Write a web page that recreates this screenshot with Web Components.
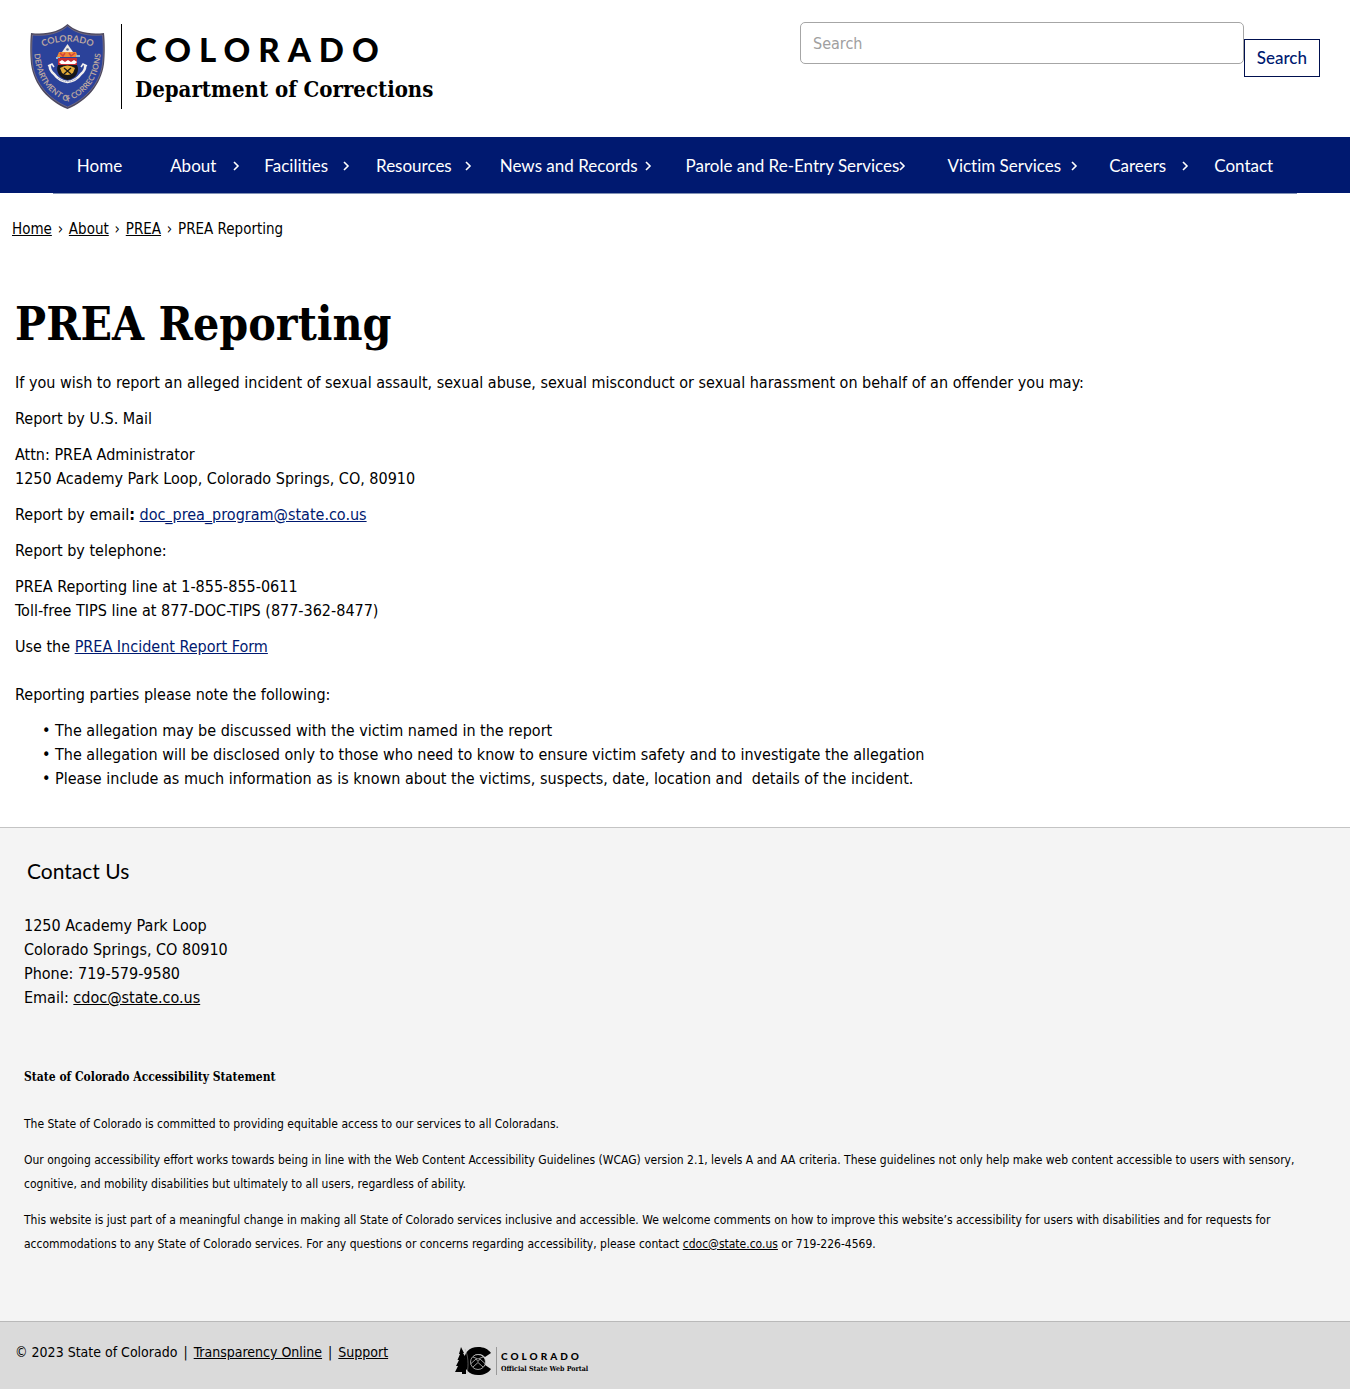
<!DOCTYPE html>
<html lang="en">
<head>
<meta charset="utf-8">
<meta name="viewport" content="width=device-width, initial-scale=1">
<title>PREA Reporting | Department of Corrections</title>
<style>
  :root {
    --navy: #001970;
    --body-font: "DejaVu Sans Condensed", "Trebuchet MS", sans-serif;
    --sans-font: Lato, "Open Sans", sans-serif;
    --slab-font: "DejaVu Serif Condensed", "DejaVu Serif", serif;
  }
  body { margin: 0; background: #fff; color: #000; font: 16px/24px var(--body-font); }
</style>
</head>
<body>
<doc-page></doc-page>

<script>
const define = (name, html) => {
  const template = document.createElement('template');
  template.innerHTML = html;
  customElements.define(name, class extends HTMLElement {
    constructor() {
      super();
      this.attachShadow({ mode: 'open' }).append(template.content.cloneNode(true));
    }
  });
};

define('doc-shield', `
<style>
  :host { display: block; width: 75px; height: 85px; flex: none; }
  svg { display: block; width: 100%; height: 100%; }
  text { font: 700 9px Lato, sans-serif; fill: #b9a6a0; }
  .rim { font-size: 8px; }
</style>
<svg viewBox="0 0 75 85" role="img" aria-label="Department of Corrections badge">
  <defs>
    <path id="top" d="M10 24Q37.500 11 65 24"/>
    <path id="rim" d="M4 20C4 52 15 68 37.500 78C60 68 71 52 71 20"/>
  </defs>
  <path d="M37.500 0C30 7 17 11 1 9C0 18 0 30 1 40C4 61 18 77 37.500 85C57 77 71 61 74 40C75 30 75 18 74 9C58 11 45 7 37.500 0Z" fill="#4d4960"/>
  <path d="M37.500 2C30 9 17 12.500 2.500 11C1.500 20 1.500 30 2.500 40C5.500 60 19 75 37.500 83C56 75 69.500 60 72.500 40C73.500 30 73.500 20 72.500 11C58 12.500 45 9 37.500 2Z" fill="#2b429a" stroke="#8c7c86" stroke-width=".6"/>
  <text text-anchor="middle"><textPath href="#top" startOffset="50%">COLORADO</textPath></text>
  <text class="rim" text-anchor="middle"><textPath href="#rim" startOffset="50%">DEPARTMENT OF CORRECTIONS</textPath></text>
  <path d="M37.500 20L43 28H32Z" fill="#f0e9e0"/>
  <circle cx="37.500" cy="25.500" r="1.300" fill="#52628e"/>
  <path d="M29 28h17l2 5H27z" fill="#f08a35"/>
  <path d="M30 29l3 3 2-3M39 29l2 3 4-3" fill="none" stroke="#d3433c" stroke-width="1.500"/>
  <path d="M26 33h4v2h-4zM46 31h4v2h-4z" fill="#8fb6d8"/>
  <path d="M28 34h19v7H28z" fill="#c62f36"/>
  <path d="M29 38l3-2 3 2 3-2 3 2 3-2 3 2-2 2H31z" fill="#fff"/>
  <path d="M28 41h19c3 6-1 14-9.500 15C30 55 25 47 28 41Z" fill="#17171b"/>
  <path d="M30 44q7.500-5 15 0l-2 5q-5.500 4-11 0z" fill="#e1aa37"/>
  <path d="M34 44l7 6M41 44l-7 6" stroke="#17171b" stroke-width="1.300"/>
  <path d="M20 41q-1 5 4 9q5 7 13.500 8q8.500-1 13.500-8q5-4 4-9" fill="none" stroke="#f1eff0" stroke-width="2.400"/>
  <path d="M18 42l4-2 2 3M57 42l-4-2-2 3" fill="none" stroke="#f1eff0" stroke-width="1.500"/>
  <path d="M28 54q9.500 7 19 0" fill="none" stroke="#7d83ad" stroke-width=".7" stroke-dasharray="1.500 1"/>
</svg>`);

define('site-brand', `
<style>
  :host { display: flex; padding-top: 2px; }
  .words { margin-left: 16px; padding-left: 13px; border-left: 1px solid #000; }
  .state { font: 900 33px/40px var(--sans-font); letter-spacing: 8px; padding-top: 5px; }
  .dept { font: 700 22px/32px var(--slab-font); padding-top: 4px; white-space: nowrap; }
</style>
<doc-shield></doc-shield>
<div class="words"><div class="state">COLORADO</div><div class="dept">Department of Corrections</div></div>`);

define('site-search', `
<style>
  :host { display: block; flex: 0 1 520px; }
  form { display: flex; align-items: flex-start; }
  input { flex: 1; min-width: 0; box-sizing: border-box; height: 42px; margin: 0; padding: 0 12px; border: 1px solid #a6a6a6; border-radius: 5px; background: #fff; font: 16px/24px var(--body-font); color: #000; }
  input::placeholder { color: #a0a0a0; opacity: 1; }
  button { box-sizing: border-box; height: 38px; margin: 17px 0 0; padding: 0 12px; border: 1px solid #00104f; background: #fff; color: var(--navy); font: 500 17px/24px var(--sans-font); }
</style>
<form role="search"><input type="search" placeholder="Search" aria-label="Search"><button type="button">Search</button></form>`);

define('nav-item', `
<style>
  :host { display: block; position: relative; padding: 17px 24px 15px; white-space: nowrap; }
  svg { display: none; position: absolute; right: calc(10% - 9px); top: 24px; width: 8px; height: 10px; }
  :host([expands]) svg { display: block; }
  ::slotted(a) { color: #fff; text-decoration: none; }
</style>
<slot></slot>
<svg viewBox="0 0 8 10" aria-hidden="true"><path d="M2 1l4 4-4 4" fill="none" stroke="#fff" stroke-width="1.600"/></svg>`);

define('site-nav', `
<style>
  :host { display: block; height: 56px; background: var(--navy); font: 17px/24px var(--sans-font); font-variant-ligatures: none; }
  nav { display: flex; width: max-content; margin: 0 auto; border-bottom: 1px solid #8292b4; }
</style>
<nav aria-label="Main">
  <nav-item><a href="#">Home</a></nav-item>
  <nav-item expands><a href="#">About</a></nav-item>
  <nav-item expands><a href="#">Facilities</a></nav-item>
  <nav-item expands><a href="#">Resources</a></nav-item>
  <nav-item expands><a href="#">News and Records</a></nav-item>
  <nav-item expands><a href="#">Parole and Re-Entry Services</a></nav-item>
  <nav-item expands><a href="#">Victim Services</a></nav-item>
  <nav-item expands><a href="#">Careers</a></nav-item>
  <nav-item><a href="#">Contact</a></nav-item>
</nav>`);

define('site-header', `
<style>
  :host { display: block; }
  header { display: flex; justify-content: space-between; gap: 24px; padding: 22px 30px 28px; }
</style>
<header><site-brand></site-brand><site-search></site-search></header>`);

define('bread-crumbs', `
<style>
  :host { display: block; padding: 24px 12px 0; font-size: 15px; }
  ol { display: flex; margin: 0; padding: 0; list-style: none; }
  li + li::before { content: "›"; display: inline-block; width: 17px; text-align: center; }
  a { color: #000; }
</style>
<nav aria-label="Breadcrumb"><ol>
  <li><a href="#">Home</a></li><li><a href="#">About</a></li><li><a href="#">PREA</a></li><li>PREA Reporting</li>
</ol></nav>`);

define('page-article', `
<style>
  :host { display: block; padding: 53px 15px 36px; }
  h1 { margin: 0 0 17px; font: 700 46px/60px var(--slab-font); }
  p { margin: 0 0 12px; }
  .gap { margin-bottom: 24px; }
  ul { margin: 0; padding-left: 40px; list-style-type: "• "; }
  a { color: var(--navy); }
</style>
<h1>PREA Reporting</h1>
<p>If you wish to report an alleged incident of sexual assault, sexual abuse, sexual misconduct or sexual harassment on behalf of an offender you may:</p>
<p>Report by U.S. Mail</p>
<p>Attn: PREA Administrator<br>1250 Academy Park Loop, Colorado Springs, CO, 80910</p>
<p>Report by email<b>:</b> <a href="#">doc_prea_program@state.co.us</a></p>
<p>Report by telephone:</p>
<p>PREA Reporting line at 1-855-855-0611<br>Toll-free TIPS line at 877-DOC-TIPS (877-362-8477)</p>
<p class="gap">Use the <a href="#">PREA Incident Report Form</a></p>
<p>Reporting parties please note the following:</p>
<ul>
  <li>The allegation may be discussed with the victim named in the report</li>
  <li>The allegation will be disclosed only to those who need to know to ensure victim safety and to investigate the allegation</li>
  <li>Please include as much information as is known about the victims, suspects, date, location and&nbsp; details of the incident.</li>
</ul>`);

define('contact-footer', `
<style>
  :host { display: block; padding: 31px 24px 65px; border-top: 1px solid #c4c4c4; background: #f4f4f4; }
  h2 { margin: 0 3px 31px; font: 400 21px/24px var(--sans-font); }
  address { margin-bottom: 55px; font-style: normal; }
  h3 { margin: 0 0 23px; font: 700 12px/24px var(--slab-font); }
  p { margin: 0 0 12px; font-size: 12px; }
  p:last-child { margin-bottom: 0; }
  a { color: #000; }
</style>
<h2>Contact Us</h2>
<address>1250 Academy Park Loop<br>Colorado Springs, CO 80910<br>Phone: 719-579-9580<br>Email: <a href="#">cdoc@state.co.us</a></address>
<h3>State of Colorado Accessibility Statement</h3>
<p>The State of Colorado is committed to providing equitable access to our services to all Coloradans.</p>
<p>Our ongoing accessibility effort works towards being in line with the Web Content Accessibility Guidelines (WCAG) version 2.1, levels A and AA criteria. These guidelines not only help make web content accessible to users with sensory, cognitive, and mobility disabilities but ultimately to all users, regardless of ability.</p>
<p>This website is just part of a meaningful change in making all State of Colorado services inclusive and accessible. We welcome comments on how to improve this website’s accessibility for users with disabilities and for requests for accommodations to any State of Colorado services. For any questions or concerns regarding accessibility, please contact <a href="#">cdoc@state.co.us</a> or 719-226-4569.</p>`);

define('portal-logo', `
<style>
  :host { display: flex; }
  svg { width: 36px; height: 28px; flex: none; }
  .words { margin-left: 5px; padding-left: 4px; border-left: 1px solid #999; white-space: nowrap; }
  .state { font: 900 10px/14px var(--sans-font); letter-spacing: 3px; padding-top: 2px; }
  .portal { font: 700 7px/12px var(--slab-font); }
</style>
<svg viewBox="0 0 36 28" role="img" aria-label="State of Colorado logo">
  <path d="M6 0L9 6H8L11 11H9.500L12 16H11V27H7V25H0L3 19H1L4 13H2.500L5 7H4Z" fill="#000"/>
  <path d="M36 6C33 2 29 0 23 0C14 0 9 6 9 14C9 22 14 28 23 28C29 28 33 26 36 22L30 18C28 20 26 21 24 21C19 21 17 18 17 14C17 10 19 7 24 7C26 7 28 8 30 10Z" fill="#000"/>
  <circle cx="23" cy="15" r="7.500" fill="#000" stroke="#c4c4c4" stroke-width=".8"/>
  <path d="M15.500 17L21 12L23 14.500L25 12L30.500 17M18 20L23 15.500L28 20M18 10L23 12L28 10" fill="none" stroke="#c4c4c4" stroke-width=".8"/>
  <path d="M10 2C13 8 14 18 12 26" fill="none" stroke="#aaa" stroke-width=".5"/>
</svg>
<div class="words"><div class="state">COLORADO</div><div class="portal">Official State Web Portal</div></div>`);

define('legal-bar', `
<style>
  :host { display: grid; grid-template-columns: 1fr 2fr; padding: 18px 0 16px; border-top: 1px solid #b9b9b9; background: #dadada; font-size: 14px; }
  .legal { display: flex; gap: 6px; padding: 0 0 7px 15px; white-space: nowrap; }
  a { color: #000; }
  portal-logo { padding: 7px 0 0 5px; }
</style>
<div class="legal"><span>© 2023 State of Colorado</span><span>|</span><a href="#">Transparency Online</a><span>|</span><a href="#">Support</a></div>
<portal-logo></portal-logo>`);

define('doc-page', `
<style>:host { display: block; } main, footer { display: block; }</style>
<site-header></site-header>
<site-nav></site-nav>
<bread-crumbs></bread-crumbs>
<main><page-article></page-article></main>
<footer><contact-footer></contact-footer><legal-bar></legal-bar></footer>`);
</script>
</body>
</html>
